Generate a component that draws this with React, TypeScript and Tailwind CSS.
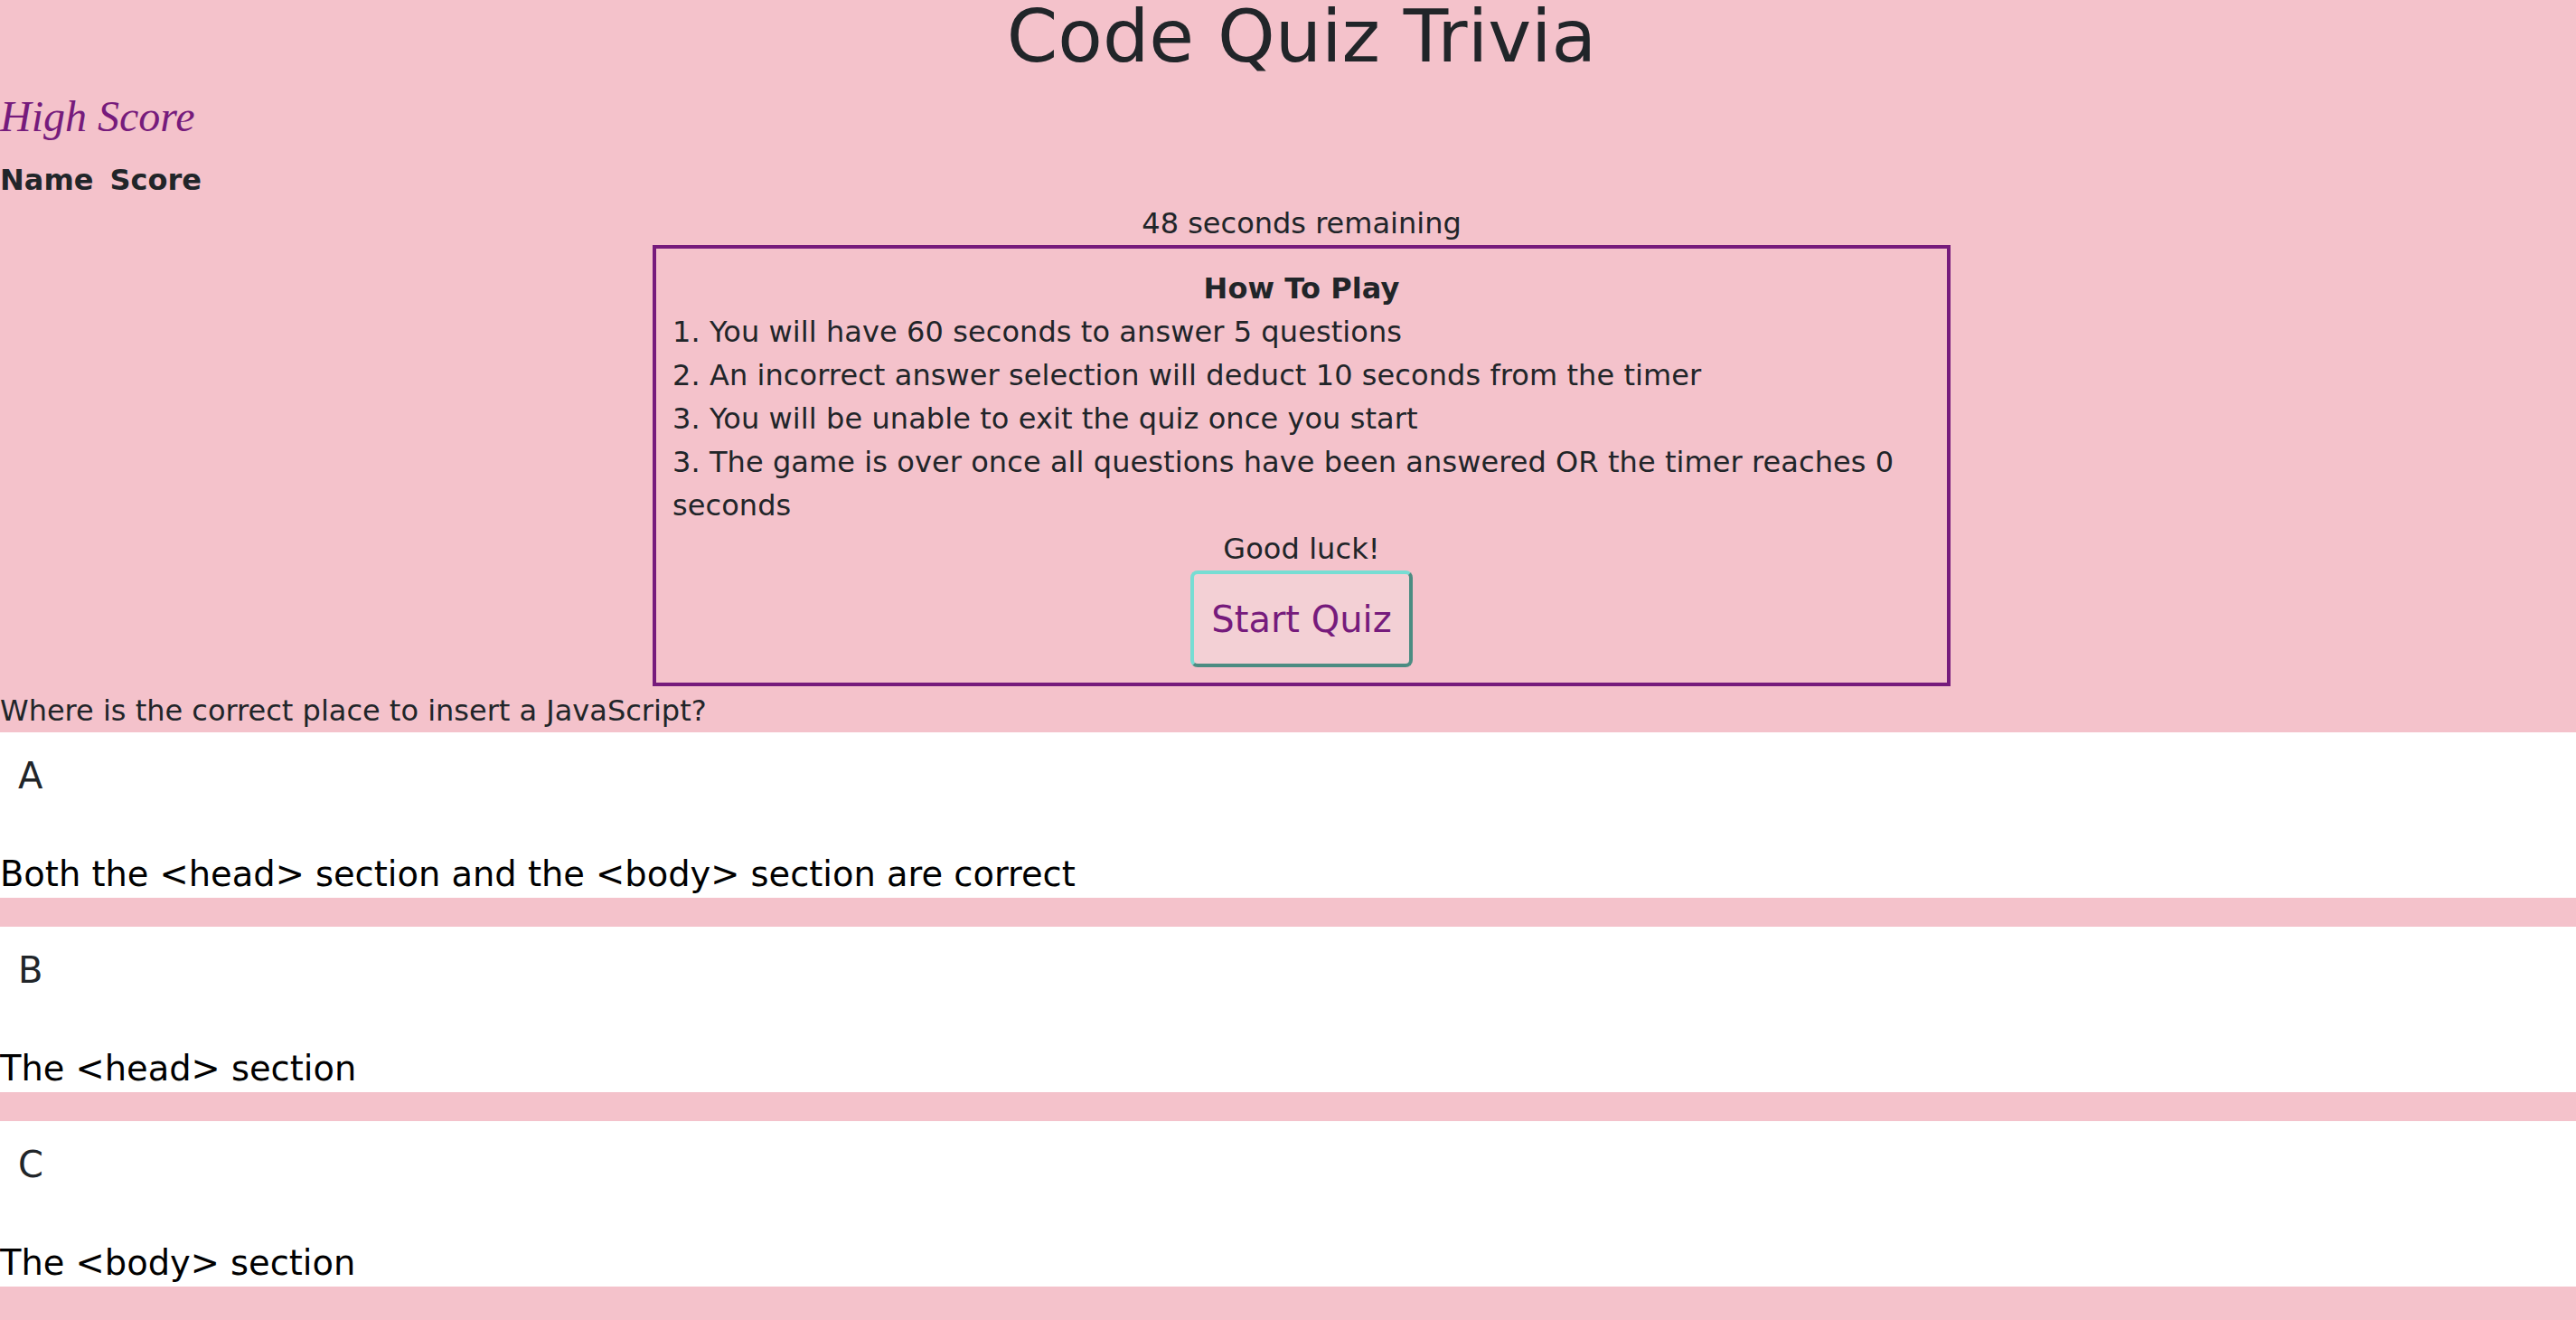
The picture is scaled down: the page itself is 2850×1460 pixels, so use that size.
import React from 'react';

const rules = [
  '1. You will have 60 seconds to answer 5 questions',
  '2. An incorrect answer selection will deduct 10 seconds from the timer',
  '3. You will be unable to exit the quiz once you start',
  '3. The game is over once all questions have been answered OR the timer reaches 0 seconds',
];

const answers = [
  { letter: 'A', text: 'Both the <head> section and the <body> section are correct' },
  { letter: 'B', text: 'The <head> section' },
  { letter: 'C', text: 'The <body> section' },
];

export default function App() {
  return (
    <div className="min-h-screen overflow-hidden bg-[#f4c2cb] font-['DejaVu_Sans',sans-serif] text-[#212529]">
      <div className="w-[2880px]">
        <h1 className="text-center text-[81px] leading-[81px]">Code Quiz Trivia</h1>

        {/* High score table */}
        <section className="mt-[19px]">
          <h2 className="font-['Liberation_Serif',serif] text-[48px] italic leading-[58px] text-[#761b7c]">
            High Score
          </h2>
          <div className="mt-[17px] flex gap-[18px] text-[32px] font-bold leading-[48px]">
            <span>Name</span>
            <span>Score</span>
          </div>
        </section>

        <p className="text-center text-[32px] leading-[48px]">48 seconds remaining</p>

        {/* Instructions */}
        <div className="mx-auto w-[1436px] border-4 border-[#761b7c] px-[18px] pt-[20px] pb-[17px] text-[32px] leading-[48px] tracking-[0.08px]">
          <h3 className="text-center font-bold">How To Play</h3>
          {rules.map((rule, i) => (
            <p key={i}>{rule}</p>
          ))}
          <p className="text-center">Good luck!</p>
          <div className="flex justify-center">
            <button className="flex h-[107px] items-center rounded-[8px] border-4 border-t-[#76ddd3] border-l-[#76ddd3] border-r-[#4b8c82] border-b-[#4b8c82] bg-[#f3d0d5] px-[19px] text-[40px] leading-[60px] tracking-normal text-[#761b7c]">
              Start Quiz
            </button>
          </div>
        </div>

        {/* Question */}
        <p className="mt-[3px] text-[32px] leading-[48px]">Where is the correct place to insert a JavaScript?</p>
        {answers.map((a) => (
          <div key={a.letter} className="mb-[32px] h-[183px] bg-white">
            <div className="pt-[18px] pl-[20px] text-[40px] leading-[60px]">{a.letter}</div>
            <div className="mt-[56px] text-[38.4px] leading-[45px] text-black">{a.text}</div>
          </div>
        ))}
      </div>
    </div>
  );
}
